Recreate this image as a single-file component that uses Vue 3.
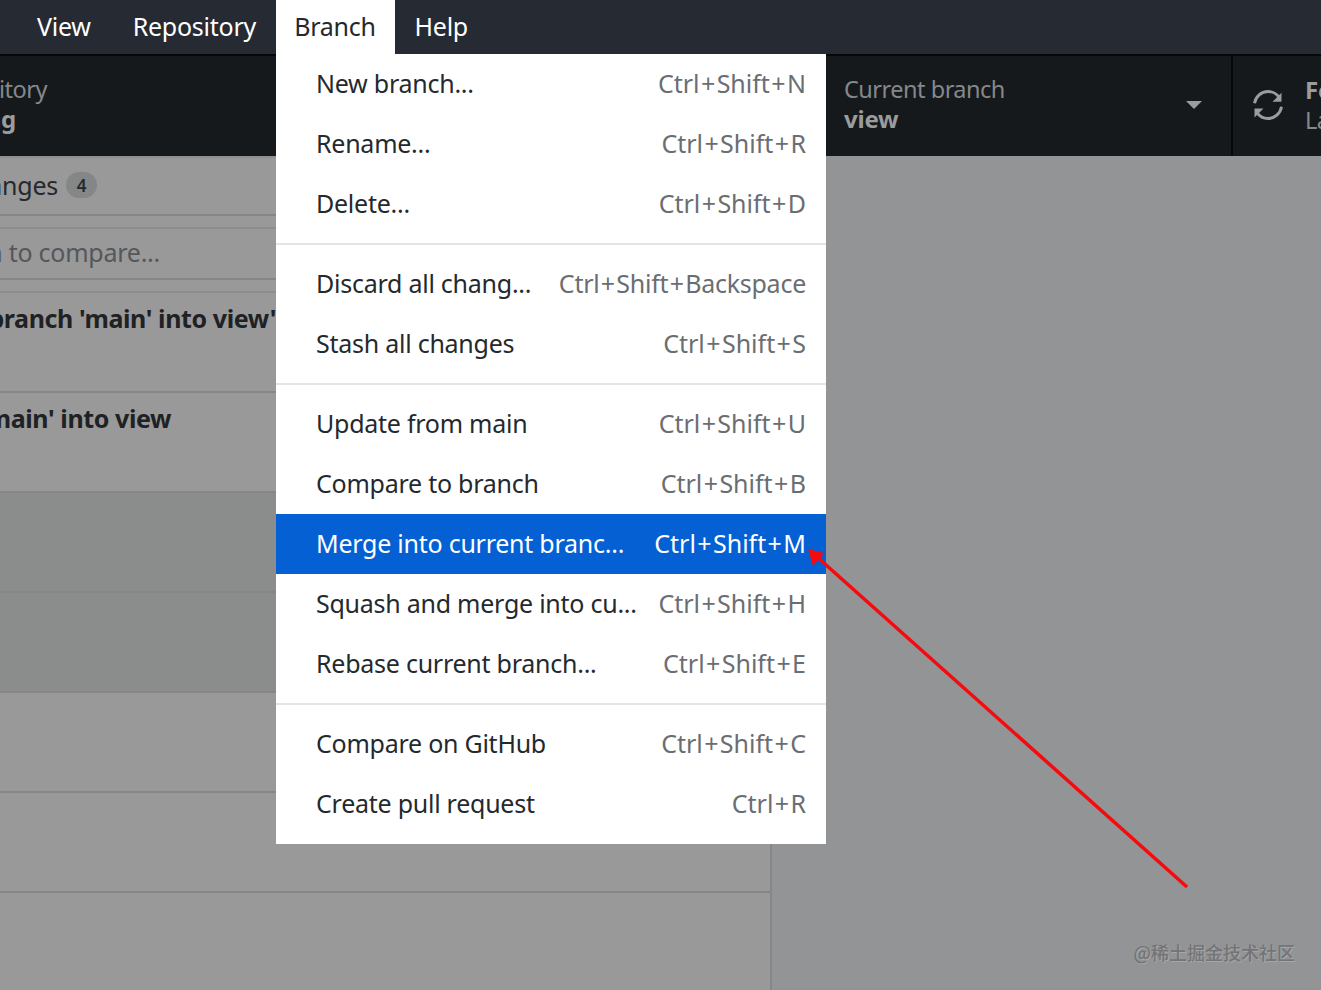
<script setup>
const menuGroups = [
  [
    { label: 'New branch...', keys: ['Ctrl', 'Shift', 'N'] },
    { label: 'Rename...', keys: ['Ctrl', 'Shift', 'R'] },
    { label: 'Delete...', keys: ['Ctrl', 'Shift', 'D'] },
  ],
  [
    { label: 'Discard all chang...', keys: ['Ctrl', 'Shift', 'Backspace'], tight: true },
    { label: 'Stash all changes', keys: ['Ctrl', 'Shift', 'S'] },
  ],
  [
    { label: 'Update from main', keys: ['Ctrl', 'Shift', 'U'] },
    { label: 'Compare to branch', keys: ['Ctrl', 'Shift', 'B'] },
    { label: 'Merge into current branc...', keys: ['Ctrl', 'Shift', 'M'], active: true },
    { label: 'Squash and merge into cu...', keys: ['Ctrl', 'Shift', 'H'] },
    { label: 'Rebase current branch...', keys: ['Ctrl', 'Shift', 'E'] },
  ],
  [
    { label: 'Compare on GitHub', keys: ['Ctrl', 'Shift', 'C'] },
    { label: 'Create pull request', keys: ['Ctrl', 'R'] },
  ],
]
const commits = [
  { title: "Merge branch 'main' into view'", tone: 'light' },
  { title: "Merge 'main' into view", tone: 'light' },
  { title: '', tone: 'dark' },
  { title: '', tone: 'dark' },
  { title: '', tone: 'light' },
  { title: '', tone: 'light' },
]
</script>

<template>
  <div class="app">
    <header class="menubar">
      <span class="menu-item">View</span>
      <span class="menu-item">Repository</span>
      <span class="menu-item open">Branch</span>
      <span class="menu-item help">Help</span>
    </header>

    <section class="toolbar">
      <div class="tool repo">
        <div class="clipped">
          <div class="tool-label">Current repository</div>
          <div class="tool-value repo-name">learning</div>
        </div>
      </div>
      <div class="tool branch">
        <div>
          <div class="tool-label">Current branch</div>
          <div class="tool-value">view</div>
        </div>
        <span class="caret"></span>
      </div>
      <div class="tool fetch">
        <svg class="sync" viewBox="0 0 32 32" width="36" height="36" fill="none">
          <path d="M4 14.500C5 8.500 10 4 16 4c4 0 7.500 1.900 9.700 5" stroke="#9a9c9e" stroke-width="2.600" />
          <path d="M28 5v8H20z" fill="#9a9c9e" />
          <path d="M28 17.500C27 23.500 22 28 16 28c-4 0-7.500-1.900-9.700-5" stroke="#9a9c9e" stroke-width="2.600" />
          <path d="M4 27v-8h8z" fill="#9a9c9e" />
        </svg>
        <div>
          <div class="tool-value fetch-title">Fetch origin</div>
          <div class="tool-label fetch-sub">Last fetched</div>
        </div>
      </div>
    </section>

    <main class="content">
      <aside class="sidebar">
        <div class="tabs">
          <div class="tab">
            <span class="tab-text">Changes</span>
            <span class="badge">4</span>
          </div>
        </div>
        <div class="filter">
          <span class="filter-text">Select branch to compare...</span>
        </div>
        <div class="commits">
          <div v-for="(c, i) in commits" :key="i" class="commit" :class="c.tone">
            <div v-if="i === 0" class="commit-title first"><span>{{ c.title }}</span></div>
            <div v-else-if="i === 1" class="commit-title second"><span>{{ c.title }}</span></div>
          </div>
        </div>
      </aside>
      <div class="detail"></div>
    </main>

    <nav class="dropdown">
      <template v-for="(group, g) in menuGroups" :key="g">
        <div v-if="g > 0" class="sep"></div>
        <div
          v-for="item in group"
          :key="item.label"
          class="row"
          :class="{ active: item.active }"
        >
          <span class="row-label">{{ item.label }}</span>
          <span class="row-keys" :class="{ tight: item.tight }">
            <template v-for="(k, n) in item.keys" :key="k"><span v-if="n > 0" class="plus">+</span>{{ k }}</template>
          </span>
        </div>
      </template>
    </nav>

    <svg class="arrow" width="1321" height="990" viewBox="0 0 1321 990">
      <line x1="1187" y1="887" x2="816" y2="556" stroke="#f60a0d" stroke-width="3.500" />
      <path d="M808 549 L824 553 L813 566 Z" fill="#f60a0d" />
    </svg>

    <div class="watermark">@稀土掘金技术社区</div>
  </div>
</template>

<style scoped>
.app {
  position: relative;
  width: 1321px;
  height: 990px;
  overflow: hidden;
  display: flex;
  flex-direction: column;
  background: #939496;
  font-family: "Noto Sans", "Open Sans", sans-serif;
  font-size: 25px;
  letter-spacing: -0.25px;
  color: #24292e;
}
.menubar {
  height: 54px;
  flex: none;
  display: flex;
  align-items: stretch;
  padding-left: 16px;
  background: #262a32;
  box-sizing: border-box;
}
.menu-item {
  display: flex;
  align-items: center;
  padding: 0 21px 2px;
  color: #fff;
}
.menu-item.open {
  width: 119px;
  box-sizing: border-box;
  padding: 0 0 2px;
  margin-left: -1.5px;
  justify-content: center;
  background: #fff;
  color: #24292e;
}
.menu-item.help {
  padding-left: 20px;
}
.toolbar {
  height: 102px;
  flex: none;
  display: flex;
  background: #16191c;
  border-top: 2px solid #060708;
  box-sizing: border-box;
  color: #97999b;
}
.tool-label {
  font-size: 23.500px;
  letter-spacing: -0.5px;
  line-height: 30px;
  color: #85888b;
}
.tool-value {
  font-size: 24px;
  line-height: 30px;
  font-weight: 700;
  color: #9a9c9e;
}
.repo {
  width: 276px;
  flex: none;
  padding-top: 18px;
  box-sizing: border-box;
}
.clipped {
  width: 47px;
  display: flex;
  flex-direction: column;
  align-items: flex-end;
  white-space: nowrap;
}
.repo-name {
  margin-right: 31px;
}
.branch {
  margin-left: 550px;
  width: 407px;
  flex: none;
  box-sizing: border-box;
  padding: 18px 29px 0 18px;
  border-right: 2px solid #060708;
  display: flex;
  justify-content: space-between;
}
.caret {
  width: 0;
  height: 0;
  margin-top: 27px;
  border-left: 8px solid transparent;
  border-right: 8px solid transparent;
  border-top: 8px solid #9a9c9e;
}
.fetch {
  flex: none;
  display: flex;
  gap: 19px;
  padding: 19px 0 0 17px;
  white-space: nowrap;
}
.sync {
  margin-top: 12px;
}
.content {
  flex: 1;
  display: flex;
  min-height: 0;
}
.sidebar {
  width: 772px;
  flex: none;
  border-right: 2px solid #858788;
  box-sizing: border-box;
  background: #999;
  overflow: hidden;
}
.tabs {
  height: 60px;
  box-sizing: border-box;
  border-bottom: 2px solid #858687;
  border-top: 2px solid #8f8f8f;
  display: flex;
  align-items: center;
}
.tab {
  width: 97px;
  flex: none;
  display: flex;
  align-items: center;
  justify-content: flex-end;
  gap: 8px;
  white-space: nowrap;
  padding-bottom: 2px;
}
.tab-text {
  flex: none;
}
.badge {
  flex: none;
  width: 31px;
  height: 26px;
  border-radius: 13px;
  background: #858688;
  font-size: 17px;
  font-weight: 600;
  display: flex;
  align-items: center;
  justify-content: center;
}
.filter {
  margin-top: 11px;
  height: 53px;
  box-sizing: border-box;
  border-top: 2px solid #8c8d8e;
  border-bottom: 2px solid #858687;
  display: flex;
  align-items: center;
  color: #54575b;
  white-space: nowrap;
}
.filter-text {
  width: 160px;
  flex: none;
  display: flex;
  justify-content: flex-end;
  padding-bottom: 4px;
}
.commits {
  margin-top: 11px;
  border-top: 2px solid #8c8d8e;
}
.commit {
  height: 100px;
  box-sizing: border-box;
  border-bottom: 2px solid #858687;
  white-space: nowrap;
  padding-top: 8px;
  font-weight: 700;
  letter-spacing: -0.4px;
  color: #1f2225;
}
.commit.dark {
  background: #8b8d8d;
}
.commit-title {
  display: flex;
  justify-content: flex-end;
}
.commit-title span {
  flex: none;
}
.commit-title.first {
  width: 276px;
}
.commit-title.second {
  width: 171px;
}
.detail {
  flex: 1;
}
.dropdown {
  position: absolute;
  left: 276px;
  top: 54px;
  width: 550px;
  padding-bottom: 10px;
  background: #fff;
}
.row {
  height: 60px;
  box-sizing: border-box;
  padding: 0 20px 2px 40px;
  display: flex;
  align-items: center;
  justify-content: space-between;
  white-space: nowrap;
}
.row-keys {
  letter-spacing: 0;
  color: #6a6e73;
}
.row-keys.tight {
  letter-spacing: -0.25px;
}
.plus {
  padding: 0 1.400px;
}
.row.active {
  background: #0560d4;
  color: #fff;
}
.row.active .row-keys {
  color: #fff;
}
.sep {
  height: 20px;
  display: flex;
  align-items: center;
}
.sep::before {
  content: "";
  display: block;
  width: 100%;
  height: 2px;
  background: #e3e4e6;
}
.arrow {
  position: absolute;
  inset: 0;
  pointer-events: none;
}
.watermark {
  position: absolute;
  right: 26px;
  top: 940px;
  font-size: 18px;
  line-height: 24px;
  letter-spacing: 0;
  font-weight: 500;
  color: #737476;
  text-shadow: 1px 1px 0 #a6a7a8;
  font-family: "Noto Sans CJK SC", "Noto Sans", sans-serif;
}
</style>
